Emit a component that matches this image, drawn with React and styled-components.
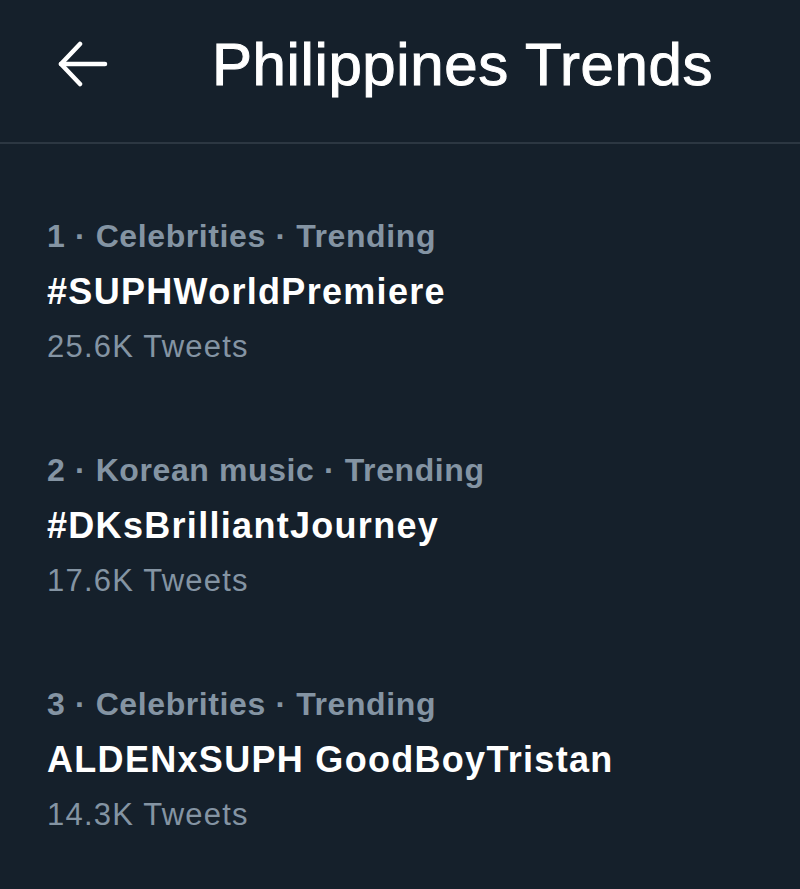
import React from 'react';
import styled, { createGlobalStyle } from 'styled-components';

const GlobalStyle = createGlobalStyle`
    html, body {
        margin: 0;
        padding: 0;
        background: #15202b;
    }
    body {
        font-family: 'Liberation Sans', Arial, sans-serif;
    }`;

const Page = styled.div`
    width: 800px;
    height: 889px;
    background: #15202b;
    overflow: hidden;`;

const Header = styled.header`
    display: flex;
    align-items: center;
    box-sizing: border-box;
    height: 144px;
    padding: 0 0 14px 58px;
    border-bottom: 2px solid #2c3742;`;

const BackBtn = styled.button`
    display: flex;
    width: 50px;
    height: 46px;
    padding: 0;
    border: none;
    background: none;
    color: #ffffff;
    margin-right: 104px;`;

const Title = styled.h1`
    margin: 0;
    color: #ffffff;
    font-size: 60px;
    font-weight: 400;
    -webkit-text-stroke: 1px #ffffff;
    letter-spacing: 0.6px;`;

const List = styled.div`
    display: flex;
    flex-direction: column;
    gap: 69px;
    padding: 65px 0 0 47px;`;

const Trend = styled.div`
    display: flex;
    flex-direction: column;`;

const Meta = styled.div`
    color: #8494a3;
    font-size: 32px;
    font-weight: 700;
    line-height: 55px;
    letter-spacing: 0.6px;`;

const Name = styled.div`
    color: #ffffff;
    font-size: 36px;
    font-weight: 700;
    line-height: 55px;
    letter-spacing: 1.3px;`;

const Count = styled.div`
    color: #8494a3;
    font-size: 31px;
    line-height: 55px;
    letter-spacing: 1.2px;`;

const trends = [
    { rank: 1, category: 'Celebrities', name: '#SUPHWorldPremiere', tweets: '25.6K' },
    { rank: 2, category: 'Korean music', name: '#DKsBrilliantJourney', tweets: '17.6K' },
    { rank: 3, category: 'Celebrities', name: 'ALDENxSUPH GoodBoyTristan', tweets: '14.3K' },
];

export default function App() {
    return (
        <Page>
            <GlobalStyle />
            <Header>
                <BackBtn aria-label='back'>
                    <svg width='50' height='46' viewBox='0 0 50 46' fill='none' stroke='currentColor' strokeWidth='4.5' strokeLinecap='round' strokeLinejoin='round'>
                        <path d='M47 23H3' />
                        <path d='M22 3L3 23l19 20' />
                    </svg>
                </BackBtn>
                <Title>Philippines Trends</Title>
            </Header>
            <List>
                {trends.map(t => (
                    <Trend key={t.rank}>
                        <Meta>{t.rank} · {t.category} · Trending</Meta>
                        <Name>{t.name}</Name>
                        <Count>{t.tweets} Tweets</Count>
                    </Trend>
                ))}
            </List>
        </Page>
    )
}
